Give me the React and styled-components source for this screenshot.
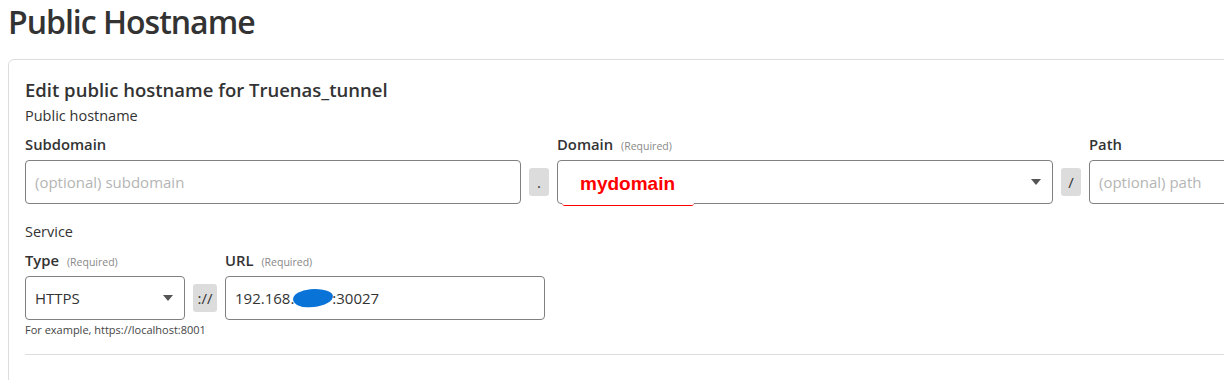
import React from "react";
import styled, { createGlobalStyle } from "styled-components";

const Global = createGlobalStyle`
  html, body { margin: 0; padding: 0; background: #fff; }
  body { font-family: "Open Sans", "Noto Sans", sans-serif; color: #333; }
  * { box-sizing: border-box; }
`;

const Page = styled.div`
  padding: 0 0 0 8px;
  overflow: hidden;
  height: 380px;
`;

const Title = styled.h1`
  margin: 0 0 16px;
  font-size: 32px;
  font-weight: 600;
  line-height: 43px;
  color: #333;
  letter-spacing: -1px;
`;

const Card = styled.div`
  border: 1px solid #ddd;
  border-radius: 6px;
  padding: 18px 16px 40px;
  width: 1400px;
`;

const CardTitle = styled.h2`
  margin: 0;
  font-size: 18.5px;
  font-weight: 600;
  line-height: 24px;
  color: #333;
`;

const SectionLabel = styled.div`
  font-size: 14.5px;
  line-height: 20px;
  height: 20px;
  margin-top: ${(p) => p.$mt || 0}px;
  color: #333;
`;

const FieldRow = styled.div`
  display: grid;
  grid-template-columns: ${(p) => p.$cols};
  column-gap: 8px;
  margin-top: ${(p) => p.$mt || 0}px;
  align-items: end;
`;

const Label = styled.div`
  font-size: 14.8px;
  font-weight: 600;
  line-height: 20px;
  height: 20px;
  margin-bottom: 6px;
  color: #333;
  display: flex;
  align-items: baseline;
  gap: 8px;
`;

const Required = styled.span`
  font-size: 10.5px;
  line-height: 14px;
  font-weight: 400;
  color: #888;
`;

const Field = styled.div`
  display: flex;
  flex-direction: column;
  position: relative;
`;

const Box = styled.div`
  height: 44px;
  border: 1px solid #808080;
  border-radius: 4px;
  display: flex;
  align-items: center;
  padding: 0 10px 0 9px;
  font-size: 15px;
  color: ${(p) => (p.$placeholder ? "#b5b5b5" : "#333")};
  position: relative;
  background: #fff;
`;

const Addon = styled.div`
  height: 28px;
  margin-bottom: 8px;
  background: #dcdcdc;
  border-radius: 3px;
  display: flex;
  align-items: center;
  justify-content: center;
  font-size: 15px;
  color: #333;
`;

const Caret = styled.span`
  margin-left: auto;
  width: 0;
  height: 0;
  border-left: 5px solid transparent;
  border-right: 5px solid transparent;
  border-top: 6px solid #555;
  margin-right: 1px;
`;

const Annotation = styled.div`
  position: absolute;
  left: 4px;
  top: 0;
  width: 132px;
  height: 45px;
  background: #fff;
  border-bottom: 1.5px solid #f00;
  border-radius: 0 0 3px 3px;
  display: flex;
  align-items: center;
  padding-left: 18px;
  font-family: "Liberation Sans", Arial, sans-serif;
  font-weight: 700;
  font-size: 19px;
  color: #f00;
  padding-top: 2px;
`;

const Scribble = styled.span`
  display: inline-block;
  width: 40px;
  height: 18px;
  background: #0a73d8;
  border-radius: 45% 55% 50% 40% / 50% 45% 55% 50%;
  vertical-align: middle;
  margin: 0 -1px;
  transform: rotate(-4deg);
`;

const Help = styled.div`
  font-size: 11px;
  line-height: 16px;
  color: #444;
  margin-top: 2px;
`;

const Divider = styled.hr`
  border: 0;
  border-top: 1px solid #ddd;
  margin: 16px 0 0;
`;

export default function App() {
  return (
    <Page>
      <Global />
      <Title>Public Hostname</Title>
      <Card>
        <CardTitle>Edit public hostname for Truenas_tunnel</CardTitle>
        <SectionLabel $mt={4}>Public hostname</SectionLabel>
        <FieldRow $cols="496px 20px 496px 20px 300px" $mt={8}>
          <Field>
            <Label>Subdomain</Label>
            <Box $placeholder>(optional) subdomain</Box>
          </Field>
          <Addon>.</Addon>
          <Field>
            <Label>
              Domain <Required>(Required)</Required>
            </Label>
            <Box>
              <Caret />
              <Annotation>mydomain</Annotation>
            </Box>
          </Field>
          <Addon>/</Addon>
          <Field>
            <Label>Path</Label>
            <Box $placeholder>(optional) path</Box>
          </Field>
        </FieldRow>
        <SectionLabel $mt={18}>Service</SectionLabel>
        <FieldRow $cols="160px 24px 320px" $mt={8}>
          <Field>
            <Label>
              Type <Required>(Required)</Required>
            </Label>
            <Box>
              HTTPS
              <Caret />
            </Box>
          </Field>
          <Addon>://</Addon>
          <Field>
            <Label>
              URL <Required>(Required)</Required>
            </Label>
            <Box>
              192.168.<Scribble />:30027
            </Box>
          </Field>
        </FieldRow>
        <Help>For example, https://localhost:8001</Help>
        <Divider />
      </Card>
    </Page>
  );
}
